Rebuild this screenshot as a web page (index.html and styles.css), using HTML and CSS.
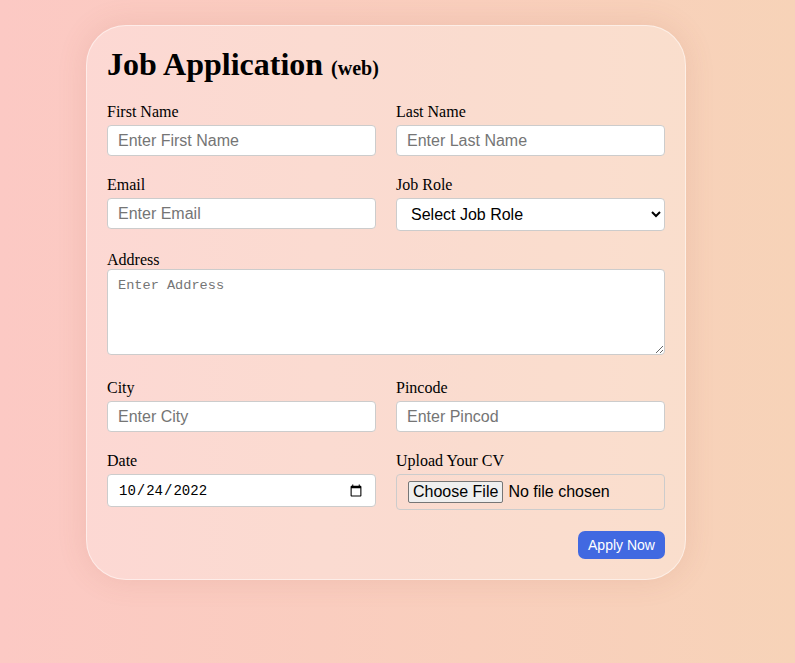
FILE: index.html
```html
<!DOCTYPE html>
<html lang="en">
<head>
<meta charset="utf-8">
<title>Job Application</title>
<link rel="stylesheet" href="styles.css">
</head>
<body>
<main class="page">
  <form class="card">
    <h1 class="title">Job Application <span class="title-sub">(web)</span></h1>
    <div class="grid">
      <div class="field">
        <label class="label" for="fname">First Name</label>
        <input class="control" id="fname" type="text" placeholder="Enter First Name">
      </div>
      <div class="field">
        <label class="label" for="lname">Last Name</label>
        <input class="control" id="lname" type="text" placeholder="Enter Last Name">
      </div>
      <div class="field">
        <label class="label" for="email">Email</label>
        <input class="control" id="email" type="email" placeholder="Enter Email">
      </div>
      <div class="field">
        <label class="label" for="role">Job Role</label>
        <select class="control select" id="role">
          <option>Select Job Role</option>
          <option>Frontend Developer</option>
          <option>Backend Developer</option>
        </select>
      </div>
      <div class="field field-wide">
        <label class="label label-tight" for="address">Address</label>
        <textarea class="textarea" id="address" placeholder="Enter Address"></textarea>
      </div>
      <div class="field">
        <label class="label" for="city">City</label>
        <input class="control" id="city" type="text" placeholder="Enter City">
      </div>
      <div class="field">
        <label class="label" for="pin">Pincode</label>
        <input class="control" id="pin" type="text" placeholder="Enter Pincod">
      </div>
      <div class="field">
        <label class="label" for="date">Date</label>
        <input class="control date" id="date" type="date" value="2022-10-24">
      </div>
      <div class="field">
        <label class="label" for="cv">Upload Your CV</label>
        <input class="file" id="cv" type="file">
      </div>
    </div>
    <div class="actions">
      <button class="apply" type="button">Apply Now</button>
    </div>
  </form>
</main>
</body>
</html>
```

FILE: styles.css
```css
* {
  box-sizing: border-box;
}

html,
body {
  margin: 0;
}

body {
  min-height: 663px;
  background: linear-gradient(90deg, #fcc9c4 0%, #f7d3b8 100%);
  font-family: "Liberation Serif", "Times New Roman", serif;
  color: #000;
}

.page {
  padding: 25px 0 0 86px;
}

.card {
  width: 600px;
  padding: 20px;
  border: 1px solid rgba(255, 255, 255, 0.5);
  border-radius: 40px;
  background: rgba(255, 255, 255, 0.28);
  box-shadow: 0 0 30px rgba(170, 90, 70, 0.14);
}

.title {
  margin: 0 0 16px;
  font-size: 32px;
  font-weight: bold;
  line-height: 37px;
}

.title-sub {
  font-size: 20px;
}

.grid {
  display: grid;
  grid-template-columns: 1fr 1fr;
  column-gap: 20px;
  row-gap: 20px;
}

.field {
  display: flex;
  flex-direction: column;
  min-width: 0;
}

.field-wide {
  grid-column: 1 / -1;
  margin-bottom: 4px;
}

.label {
  font-size: 16px;
  line-height: 18px;
  margin-bottom: 4px;
}

.label-tight {
  margin-bottom: 0;
}

.control {
  width: 100%;
  height: 31px;
  padding: 0 10px;
  border: 1px solid #ccc;
  border-radius: 4px;
  background: #fff;
  font-family: "Liberation Sans", Arial, sans-serif;
  font-size: 16px;
  color: #000;
}

.control::placeholder,
.textarea::placeholder {
  color: #757575;
}

.select {
  height: 33px;
}

.date {
  height: 33px;
  font-family: "Liberation Mono", "DejaVu Sans Mono", monospace;
  font-size: 14px;
}

.textarea {
  display: block;
  width: 100%;
  height: 86px;
  padding: 8px 10px;
  border: 1px solid #ccc;
  border-radius: 4px;
  background: #fff;
  font-family: "Liberation Mono", "DejaVu Sans Mono", monospace;
  font-size: 13.6px;
  resize: both;
}

.file {
  width: 100%;
  height: 36px;
  padding: 6px 10px 6px 11px;
  border: 1px solid #ccc;
  border-radius: 4px;
  background: transparent;
  font-family: "Liberation Sans", Arial, sans-serif;
  font-size: 16px;
  color: #000;
}

.file::file-selector-button {
  margin-right: 5px;
  padding: 1px 4px;
  border: 1px solid #767676;
  border-radius: 2px;
  background: #efefef;
  font-family: "Liberation Sans", Arial, sans-serif;
  font-size: 16px;
  color: #000;
}

.actions {
  display: flex;
  justify-content: flex-end;
  margin-top: 21px;
}

.apply {
  height: 28px;
  width: 87px;
  padding: 0;
  border: none;
  border-radius: 7px;
  background: #4169e1;
  color: #fff;
  font-family: "Liberation Sans", Arial, sans-serif;
  font-size: 14px;
}
```
